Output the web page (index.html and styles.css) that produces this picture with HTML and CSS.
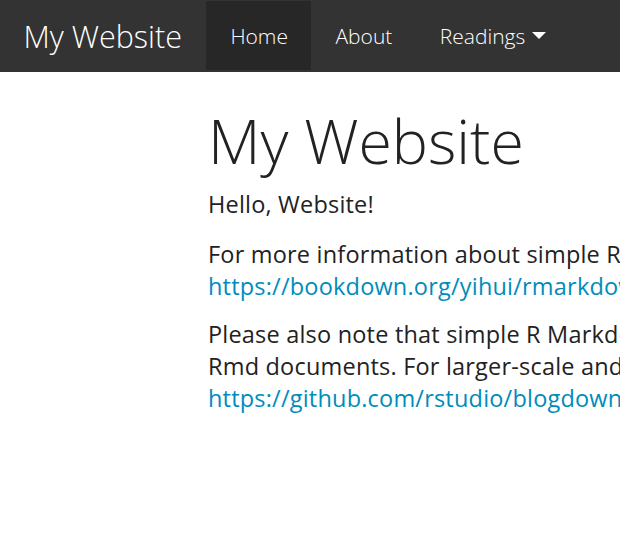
FILE: index.html
```html
<!DOCTYPE html>
<html lang="en">
<head>
<meta charset="utf-8">
<title>My Website</title>
<link rel="stylesheet" href="styles.css">
</head>
<body>
<nav class="navbar">
  <a class="brand" href="#">My Website</a>
  <ul class="nav">
    <li class="item active"><a href="#">Home</a></li>
    <li class="item"><a href="#">About</a></li>
    <li class="item"><a href="#">Readings <span class="caret"></span></a></li>
  </ul>
</nav>
<main class="main">
  <h1 class="title">My Website</h1>
  <p class="para lead">Hello, Website!</p>
  <p class="para">For more information about simple R Markdown websites, please read the documentation at<br><a class="link" href="#">https://bookdown.org/yihui/rmarkdown/rmarkdown-site.html</a>.</p>
  <p class="para">Please also note that simple R Markdown websites are suitable for relatively simple websites that only have a few<br>Rmd documents. For larger-scale and more complicated websites (e.g., blogs), you may want to try the blogdown package instead:<br><a class="link" href="#">https://github.com/rstudio/blogdown</a>.</p>
</main>
</body>
</html>
```
FILE: styles.css
```css
html, body {
  margin: 0;
  padding: 0;
  overflow: hidden;
  background: #fff;
}
body {
  font-family: "Open Sans", "Liberation Sans", sans-serif;
  color: #222;
  width: 620px;
  height: 550px;
}
.navbar {
  display: flex;
  align-items: stretch;
  height: 72px;
  background: #333;
  box-sizing: border-box;
  padding: 1px 0 2px;
}
.brand {
  display: flex;
  align-items: center;
  padding: 0 24.5px 0 23.5px;
  font-size: 30.5px;
  font-weight: 300;
  color: #fff;
  text-decoration: none;
}
.nav {
  display: flex;
  margin: 0;
  padding: 0;
  list-style: none;
}
.item {
  display: flex;
}
.item a {
  display: flex;
  align-items: center;
  padding: 0 23.5px 0 24px;
  font-size: 21px;
  font-weight: 300;
  color: #fff;
  text-decoration: none;
  white-space: nowrap;
}
.item.active {
  background: #272727;
}
.caret {
  display: inline-block;
  width: 0;
  height: 0;
  margin-left: 7px;
  border-top: 7px solid #fff;
  border-left: 7.5px solid transparent;
  border-right: 7.5px solid transparent;
}
.main {
  padding-left: 208px;
  white-space: nowrap;
}
.title {
  margin: 36px 0 13px;
  font-size: 60.8px;
  font-weight: 300;
  line-height: 1.1;
}
.para {
  margin: 0 0 16px;
  font-size: 23.5px;
  letter-spacing: 0.2px;
  line-height: 32px;
}
.para.lead {
  margin-bottom: 18px;
}
.link {
  color: #008cba;
  text-decoration: none;
}
```
